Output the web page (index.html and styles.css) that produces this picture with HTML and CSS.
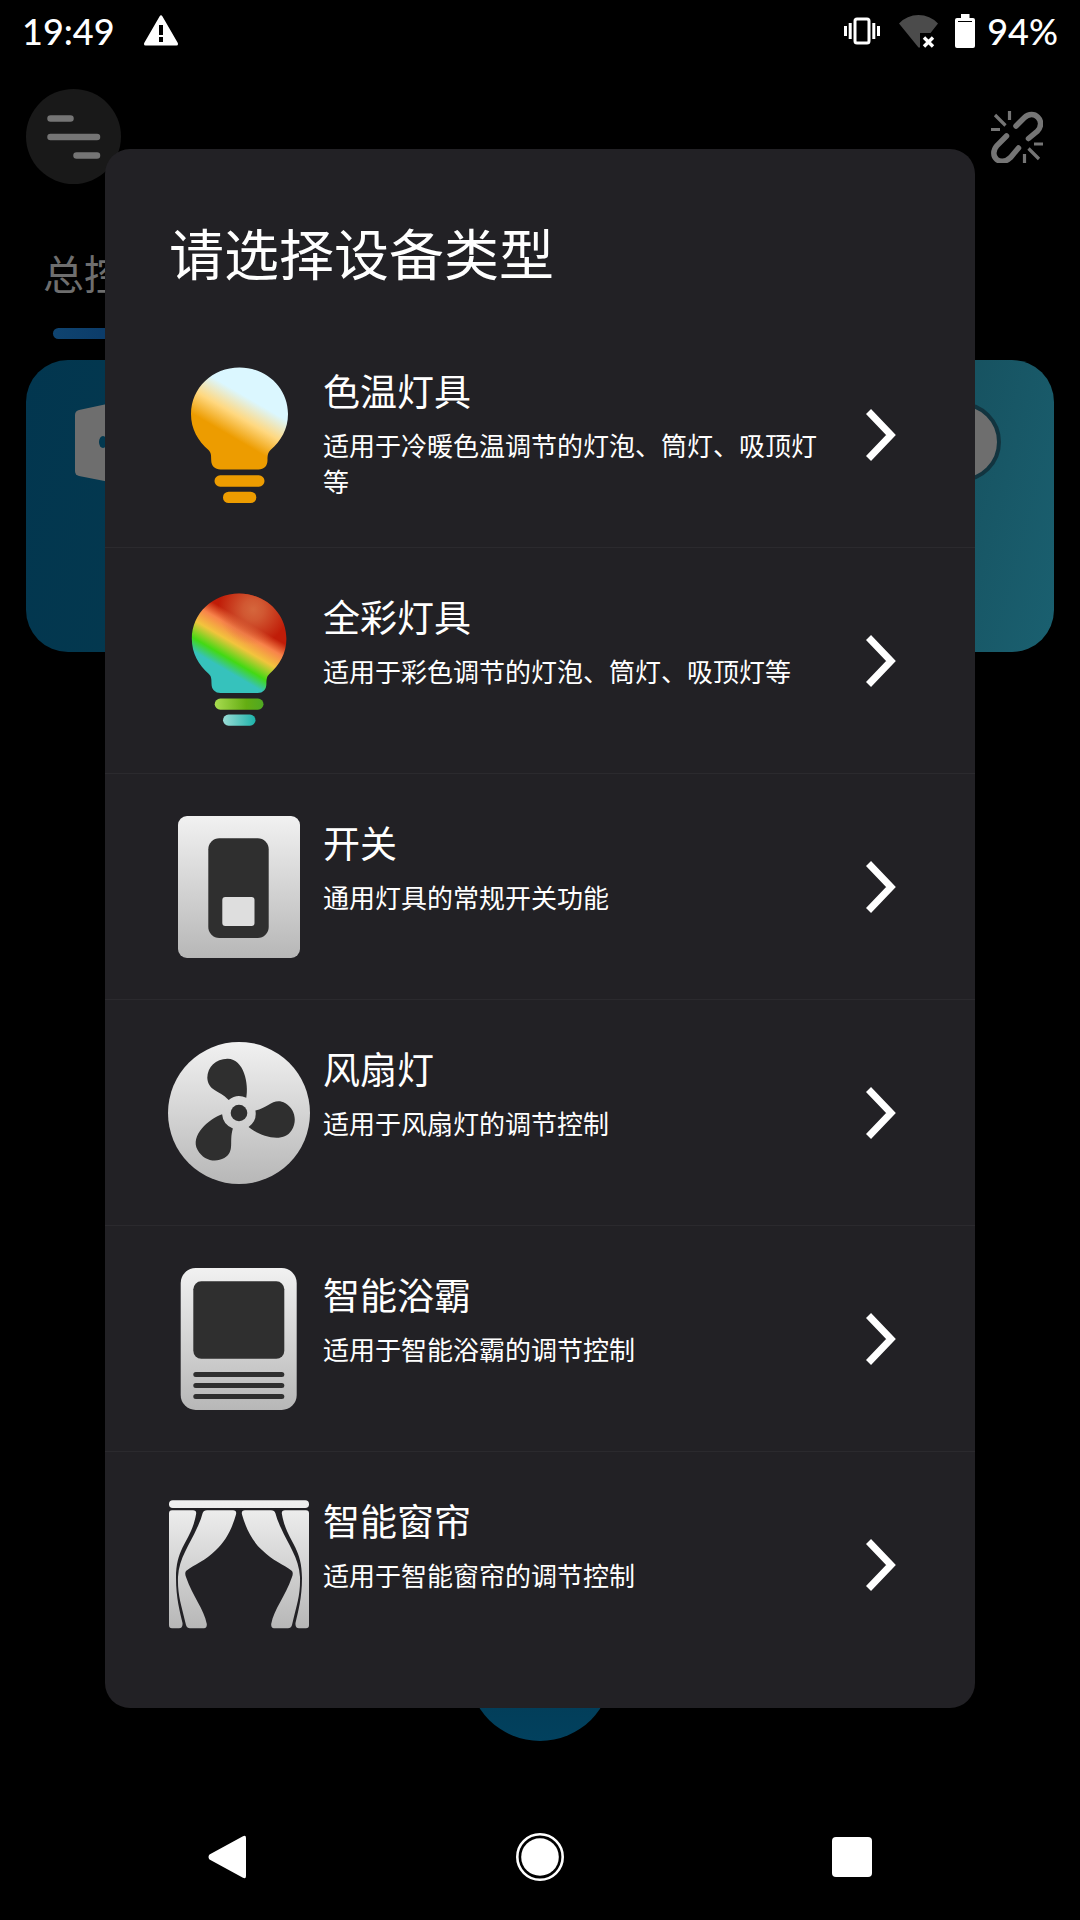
FILE: index.html
```html
<!DOCTYPE html>
<html lang="zh-CN">
<head>
<meta charset="utf-8">
<meta name="viewport" content="width=device-width, initial-scale=1">
<title>请选择设备类型</title>
<link rel="stylesheet" href="styles.css">
</head>
<body>
<div class="screen">
  <div class="status">
    <div class="status-group status-left">
      <time class="status-text">19:49</time>
      <svg width="36" height="32" viewBox="0 0 36 32" aria-hidden="true"><path d="M16.5 1.500Q18 -1 19.500 1.500L34.800 28Q35.500 30.500 33.500 30.500H2.500Q.5 30.500 1.200 28ZM16 10V20H20V10ZM16 22V27H20V22Z" fill="#fff" fill-rule="evenodd"/></svg>
    </div>
    <div class="status-group status-right">
      <svg class="vibrate" width="38" height="34" viewBox="0 0 38 34" aria-hidden="true"><rect x="12" y="5" width="14" height="24" rx="2" fill="none" stroke="#fff" stroke-width="3"/><path d="M2.500 12v10M7.200 9v16M30.800 9v16M35.500 12v10" stroke="#fff" stroke-width="3"/></svg>
      <svg class="wifi" width="40" height="34" viewBox="0 0 40 34" aria-hidden="true"><path d="M0 9.500Q8 1 19.500 1T39 9.500L31.500 19H21V33.500H19.500Z" fill="#4b4b4b"/><path d="M25 23.500l9 9M34 23.500l-9 9" stroke="#fff" stroke-width="3.400"/></svg>
      <svg width="20" height="34" viewBox="0 0 20 34" aria-hidden="true"><path d="M6 0h8.500v4H18q2 0 2 2v26q0 2-2 2H2q-2 0-2-2V6q0-2 2-2h4Z" fill="#fff"/><path d="M3 7.500h14" stroke="#000"/></svg>
      <span class="status-text">94%</span>
    </div>
  </div>

  <header class="topbar">
    <button class="menu" aria-label="菜单"><svg width="54" height="44" viewBox="0 0 54 44"><path d="M3.500 3.500h20M3.500 22h46.500M29.500 40.500h20.500" stroke="#757575" stroke-width="6.500" stroke-linecap="round"/></svg></button>
    <button class="unlink" aria-label="断开连接"><svg width="52" height="52" viewBox="0 0 52 52" fill="none" stroke="#757575"><path d="M25 15L33 7C43-2.500 55.500 10 46.500 20L37.500 27.500M15.500 25L6 34.500C-3 45 9 56.500 19.500 46.500L27.500 37" stroke-width="5.500" stroke-linecap="round"/><path d="M4 4L14.500 14.500M18.500 0v9M0 18.500h9M37.500 37.500L48 48M33.500 43v9M43 33h9" stroke-width="3.200"/></svg></button>
  </header>
  <nav class="tabs"><a class="tab" href="#all">总控</a></nav>
  <section class="card">
    <svg class="door" width="60" height="84" viewBox="0 0 60 84" aria-hidden="true"><path d="M0 13q0-4 4-5L60-4V85L4 74q-4-1-4-5Z" fill="#6e6e6e"/><ellipse cx="28" cy="40" rx="4" ry="6" fill="#02384f"/></svg>
    <span class="knob"></span>
  </section>
  <button class="fab" aria-label="添加"></button>

  <nav class="sysnav">
    <button aria-label="返回"><svg width="48" height="48" viewBox="0 0 48 48"><path d="M5.500 21.500L38.500 3.500Q42 1.500 42 5V43Q42 46.500 38.500 44.500L5.500 26.500Q3.500 24 5.500 21.500Z" fill="#fff"/></svg></button>
    <button aria-label="主页"><svg width="48" height="48" viewBox="0 0 48 48"><circle cx="24" cy="24" r="22.700" fill="none" stroke="#fff" stroke-width="2.600"/><circle cx="24" cy="24" r="18.800" fill="#fff"/></svg></button>
    <button aria-label="最近任务"><svg width="48" height="48" viewBox="0 0 48 48"><rect x="4" y="4" width="40" height="40" rx="4" fill="#fff"/></svg></button>
  </nav>

  <div class="overlay">
    <div class="dialog" role="dialog" aria-labelledby="dialog-title">
      <h1 class="title" id="dialog-title">请选择设备类型</h1>
      <ul class="types">
        <li><button class="type">
          <svg class="icon" viewBox="0 0 142 142"><defs>
            <linearGradient id="warm" gradientUnits="userSpaceOnUse" x1="61" y1="71" x2="82" y2="35"><stop offset="0" stop-color="#ed9c00"/><stop offset=".5" stop-color="#ffd880"/><stop offset="1" stop-color="#dbf7ff"/></linearGradient>
            <linearGradient id="metal" x1="0" y1="0" x2="0" y2="1"><stop offset="0" stop-color="#f1f1f1"/><stop offset="1" stop-color="#b7b7b7"/></linearGradient></defs>
            <path d="M71.500 3.500C98.500 3.500 120 24 120 50C120 65 113 77 102.500 86C100 88.500 99.500 91 99.500 96C99.500 102 96 105.500 90.500 105.500H52.500C47 105.500 43.200 102 43.200 96C43.200 91 43 88.500 40.500 86C30 77 23 65 23 50C23 24 44.500 3.500 71.500 3.500Z" fill="url(#warm)"/>
            <rect x="46.500" y="111.300" width="50" height="11.400" rx="5.700" fill="#ed9c00"/><rect x="55" y="127.700" width="33.300" height="11.400" rx="5.700" fill="#ed9c00"/></svg>
          <span class="copy"><span class="name">色温灯具</span><span class="desc">适用于冷暖色温调节的灯泡、筒灯、吸顶灯等</span></span>
          <svg class="chevron" viewBox="0 0 30 52"><path d="M2.500 2.500L25 26L2.500 49.500" fill="none" stroke="#fff" stroke-width="7"/></svg>
        </button></li>
        <li><button class="type">
          <svg class="icon" viewBox="0 0 142 142"><defs>
            <linearGradient id="rainbow" gradientUnits="userSpaceOnUse" x1="55.400" y1="80.700" x2="82.400" y2="34.300"><stop offset="0" stop-color="#36c2bc"/><stop offset=".22" stop-color="#43d914"/><stop offset=".52" stop-color="#f2c43d"/><stop offset=".78" stop-color="#f8834a"/><stop offset="1" stop-color="#c01d08"/></linearGradient>
            <radialGradient id="glow" gradientUnits="userSpaceOnUse" cx="86" cy="20" r="36"><stop offset="0" stop-color="#d5663c"/><stop offset=".3" stop-color="#d5663c" stop-opacity=".8"/><stop offset="1" stop-color="#d5663c" stop-opacity="0"/></radialGradient>
            <linearGradient id="lime"><stop offset="0" stop-color="#a9dc50"/><stop offset=".65" stop-color="#64ad12"/><stop offset="1" stop-color="#4fa822"/></linearGradient>
            <linearGradient id="aqua"><stop offset="0" stop-color="#9adcd6"/><stop offset="1" stop-color="#1db3aa"/></linearGradient></defs>
            <g transform="translate(1.400 .1) scale(.975)"><path d="M71.500 3.500C98.500 3.500 120 24 120 50C120 65 113 77 102.500 86C100 88.500 99.500 91 99.500 96C99.500 102 96 105.500 90.500 105.500H52.500C47 105.500 43.200 102 43.200 96C43.200 91 43 88.500 40.500 86C30 77 23 65 23 50C23 24 44.500 3.500 71.500 3.500Z" fill="url(#rainbow)"/>
            <path d="M71.500 3.500C98.500 3.500 120 24 120 50C120 65 113 77 102.500 86L40.500 86C30 77 23 65 23 50C23 24 44.500 3.500 71.500 3.500Z" fill="url(#glow)"/>
            <rect x="46.500" y="111.300" width="50" height="11.400" rx="5.700" fill="url(#lime)"/><rect x="55" y="127.700" width="33.300" height="11.400" rx="5.700" fill="url(#aqua)"/></g></svg>
          <span class="copy"><span class="name">全彩灯具</span><span class="desc">适用于彩色调节的灯泡、筒灯、吸顶灯等</span></span>
          <svg class="chevron" viewBox="0 0 30 52"><path d="M2.500 2.500L25 26L2.500 49.500" fill="none" stroke="#fff" stroke-width="7"/></svg>
        </button></li>
        <li><button class="type">
          <svg class="icon" viewBox="0 0 142 142"><rect x="10" width="122" height="142" rx="9" fill="url(#metal)"/><rect x="40.300" y="22.300" width="60.400" height="99.700" rx="11" fill="#2f2f2f"/><rect x="54.300" y="81" width="32.200" height="29" rx="3" fill="#dedede"/></svg>
          <span class="copy"><span class="name">开关</span><span class="desc">通用灯具的常规开关功能</span></span>
          <svg class="chevron" viewBox="0 0 30 52"><path d="M2.500 2.500L25 26L2.500 49.500" fill="none" stroke="#fff" stroke-width="7"/></svg>
        </button></li>
        <li><button class="type">
          <svg class="icon" viewBox="0 0 142 142"><circle cx="71" cy="71" r="71" fill="url(#metal)"/><g fill="#2f2f2f"><circle cx="71" cy="71" r="8.300"/>
            <path d="M78.300 55.700C81 42 76 17 59.700 16.700C48 16.500 39.500 25 39.300 35.700C40 49 51 47.500 60.700 58A16.500 16.500 0 0 1 78.300 55.700Z"/>
            <path transform="rotate(120 71 71)" d="M78.300 55.700C81 42 76 17 59.700 16.700C48 16.500 39.500 25 39.300 35.700C40 49 51 47.500 60.700 58A16.500 16.500 0 0 1 78.300 55.700Z"/>
            <path transform="rotate(240 71 71)" d="M78.300 55.700C81 42 76 17 59.700 16.700C48 16.500 39.500 25 39.300 35.700C40 49 51 47.500 60.700 58A16.500 16.500 0 0 1 78.300 55.700Z"/></g></svg>
          <span class="copy"><span class="name">风扇灯</span><span class="desc">适用于风扇灯的调节控制</span></span>
          <svg class="chevron" viewBox="0 0 30 52"><path d="M2.500 2.500L25 26L2.500 49.500" fill="none" stroke="#fff" stroke-width="7"/></svg>
        </button></li>
        <li><button class="type">
          <svg class="icon" viewBox="0 0 142 142"><rect x="12.700" width="116" height="142" rx="15" fill="url(#metal)"/><g fill="#2f2f2f"><rect x="25.300" y="13.300" width="91" height="77.500" rx="8"/><rect x="25.300" y="104" width="91" height="5" rx="2.500"/><rect x="25.300" y="115" width="91" height="5" rx="2.500"/><rect x="25.300" y="126" width="91" height="5" rx="2.500"/></g></svg>
          <span class="copy"><span class="name">智能浴霸</span><span class="desc">适用于智能浴霸的调节控制</span></span>
          <svg class="chevron" viewBox="0 0 30 52"><path d="M2.500 2.500L25 26L2.500 49.500" fill="none" stroke="#fff" stroke-width="7"/></svg>
        </button></li>
        <li><button class="type">
          <svg class="icon" viewBox="0 0 142 142"><defs><linearGradient id="drape" gradientUnits="userSpaceOnUse" x1="0" y1="6" x2="0" y2="134"><stop offset="0" stop-color="#f1f1f1"/><stop offset="1" stop-color="#b7b7b7"/></linearGradient></defs>
            <g fill="url(#drape)"><rect x="1" y="6.300" width="140" height="7.700" rx="3.800"/>
            <path d="M4 16.300H25Q29 16.300 28 20.500C23 48 8 52 8 84C8 104 12 118 14.500 129Q15 134.300 11 134.300H4Q1 134.300 1 131V19.500Q1 16.300 4 16.300Z"/>
            <path d="M39 16.300H65Q69 16.300 68 20.500C64 35 57 48 48 56C37 67 27 70 18 77Q16.500 79 18 83C25 103 36 115 38.800 130Q39 134.300 36 134.300H22Q19 134.300 18 131C13 110 9.500 101 10 83C11 64 22 50 29 34Q33 26 34.500 19.500Q35.500 16.300 39 16.300Z"/>
            <g transform="translate(142 0) scale(-1 1)"><path d="M4 16.300H25Q29 16.300 28 20.500C23 48 8 52 8 84C8 104 12 118 14.500 129Q15 134.300 11 134.300H4Q1 134.300 1 131V19.500Q1 16.300 4 16.300Z"/>
            <path d="M39 16.300H65Q69 16.300 68 20.500C64 35 57 48 48 56C37 67 27 70 18 77Q16.500 79 18 83C25 103 36 115 38.800 130Q39 134.300 36 134.300H22Q19 134.300 18 131C13 110 9.500 101 10 83C11 64 22 50 29 34Q33 26 34.500 19.500Q35.500 16.300 39 16.300Z"/></g></g></svg>
          <span class="copy"><span class="name">智能窗帘</span><span class="desc">适用于智能窗帘的调节控制</span></span>
          <svg class="chevron" viewBox="0 0 30 52"><path d="M2.500 2.500L25 26L2.500 49.500" fill="none" stroke="#fff" stroke-width="7"/></svg>
        </button></li>
      </ul>
    </div>
  </div>
</div>
</body>
</html>
```
FILE: styles.css
```css
* { box-sizing: border-box; }
body {
  margin: 0;
  background: #000;
  color: #fff;
  font-family: Roboto, "Noto Sans CJK SC", sans-serif;
}
button {
  margin: 0;
  padding: 0;
  border: 0;
  background: none;
  color: inherit;
  font: inherit;
}
svg { display: block; flex: none; }
.screen {
  position: relative;
  display: flex;
  flex-direction: column;
  min-height: 100vh;
}
.status {
  display: flex;
  justify-content: space-between;
  height: 64px;
  padding: 0 22px;
}
.status-group { display: flex; align-items: center; height: 62px; }
.status-left { gap: 28px; }
.status-right { gap: 12px; }
.vibrate { margin-right: 6px; }
.wifi { margin-right: 4px; }
.status-text {
  font: 500 36px/64px "Lato", sans-serif;
}
.topbar {
  display: flex;
  align-items: center;
  justify-content: space-between;
  padding: 25px 37px 0 26px;
}
.menu {
  display: grid;
  place-items: center;
  width: 95px;
  height: 95px;
  border-radius: 50%;
  background: #191919;
}
.tabs { padding: 62px 43px 21px; }
.tab {
  display: inline-flex;
  flex-direction: column;
  align-items: center;
  gap: 22px;
  color: #6e6e6e;
  font-size: 41px;
  line-height: 60px;
  text-decoration: none;
  vertical-align: top;
}
.tab::after {
  content: "";
  width: 62px;
  height: 11px;
  border-radius: 6px;
  background: linear-gradient(90deg, #0f4470, #0b3a68);
}
.card {
  display: flex;
  justify-content: space-between;
  height: 292px;
  margin: 0 26px;
  padding: 42px 53px 0 49px;
  border-radius: 42px;
  background: linear-gradient(105deg, #02364f, #04394f 20%, #164f5d 82%, #1a6070);
}
.knob {
  width: 80px;
  height: 80px;
  border: 4px solid #12343f;
  border-radius: 50%;
  background: #6e6e6e;
}
.fab {
  width: 144px;
  height: 144px;
  margin: auto auto 53px;
  border-radius: 50%;
  background: linear-gradient(#02344c, #02415e);
}
.sysnav {
  display: flex;
  align-items: center;
  justify-content: space-between;
  height: 126px;
  padding: 0 204px;
}
.overlay {
  position: absolute;
  inset: 0;
  padding: 149px 105px;
}
.dialog {
  padding: 75px 0 31px;
  border-radius: 25px;
  background: #222125;
}
.title {
  margin: 0 64px 34px;
  font-size: 55px;
  font-weight: 400;
  line-height: 64px;
}
.types { margin: 0; padding: 0; list-style: none; }
.types li + li { border-top: 1px solid #2b2a2e; }
.type {
  display: flex;
  align-items: flex-start;
  width: 100%;
  padding: 42px 79px 41px 63px;
  text-align: left;
}
.icon { width: 142px; height: 142px; }
.copy {
  display: flex;
  flex: 1;
  flex-direction: column;
  gap: 8px;
  padding: 3px 36px 0 13px;
}
.name { font-size: 37px; line-height: 54px; }
.desc { font-size: 26px; line-height: 36px; }
.chevron { width: 30px; height: 52px; align-self: center; }
```
